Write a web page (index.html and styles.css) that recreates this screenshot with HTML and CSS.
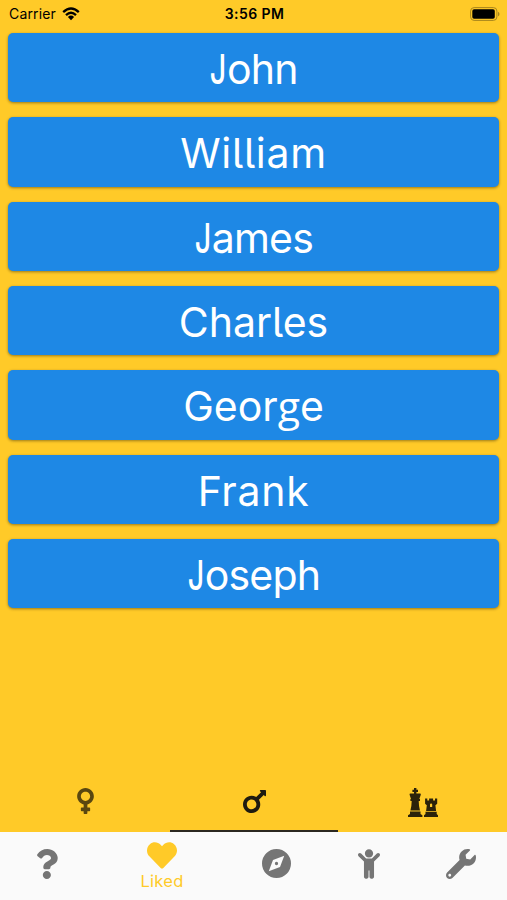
FILE: index.html
```
<!DOCTYPE html>
<html lang="en">
<head>
    <meta charset="UTF-8">
    <meta name="viewport" content="width=device-width, initial-scale=1.0">
    <title>Liked Names</title>
    <link rel="stylesheet" href="styles.css">
</head>
<body>
<header class="status">
    <div class="carrier">
        <span>Carrier</span>
        <svg class="wifi" viewBox="0 0 18 14">
            <path d="M1.2 5.2Q9-2.2 16.800 5.200M4 8.200Q9 3.400 14 8.200" fill="none" stroke="#000" stroke-width="2.300"/>
            <path d="M5.900 10Q9 7.200 12.100 10L9 13.300z"/>
        </svg>
    </div>
    <div class="clock">3:56 PM</div>
    <svg class="battery" viewBox="0 0 30 14">
        <rect x=".6" y=".6" width="26.300" height="12.800" rx="3.500" fill="none" stroke="#a8851d" stroke-width="1"/>
        <rect x="2.300" y="2.300" width="22.500" height="9.400" rx="1.800"/>
        <path d="M28 4.700v4.600q1.500-.7 1.500-2.300t-1.500-2.300z" fill="#a8851d"/>
    </svg>
</header>

<main class="names">
    <div class="card tight"><span class="narrow-j">J</span>ohn</div>
    <div class="card wide">William</div>
    <div class="card tight"><span class="narrow-j">J</span>ames</div>
    <div class="card">Charles</div>
    <div class="card">Geor<span class="double-g">g</span>e</div>
    <div class="card wide">Frank</div>
    <div class="card tight"><span class="narrow-j">J</span>oseph</div>
</main>

<div class="tabs">
    <div class="tab">
        <svg class="venus" viewBox="0 32 288 448"><path d="M288 176c0-79.500-64.500-144-144-144S0 96.500 0 176c0 68.500 47.900 125.900 112 140.400V368H76c-6.600 0-12 5.400-12 12v40c0 6.600 5.400 12 12 12h36v36c0 6.600 5.400 12 12 12h40c6.600 0 12-5.400 12-12v-36h36c6.600 0 12-5.400 12-12v-40c0-6.600-5.400-12-12-12h-36v-51.600c64.100-14.600 112-71.900 112-140.400zm-224 0c0-44.100 35.900-80 80-80s80 35.900 80 80-35.900 80-80 80-80-35.900-80-80z"/></svg>
    </div>
    <div class="tab active">
        <svg class="mars" viewBox="0 64 384 384"><path d="M372 64h-79c-10.700 0-16 12.900-8.500 20.500l16.900 16.900-80.700 80.700C198.500 167.600 172.200 160 144 160 64.500 160 0 224.500 0 304s64.500 144 144 144 144-64.500 144-144c0-28.200-8.100-54.500-22.100-76.700l80.700-80.700 16.900 16.900c7.600 7.600 20.500 2.200 20.500-8.500V76c0-6.600-5.400-12-12-12zM144 384c-44.100 0-80-35.900-80-80s35.900-80 80-80 80 35.900 80 80-35.900 80-80 80z"/></svg>
    </div>
    <div class="tab">
        <svg class="chess" viewBox="0 0 30 30">
            <path d="M6 0h2.400v1.700H10V4H8.400v1.500H12q1 0 .8 1.200L11.300 11H12v2h-1.300q.1 6 1.300 9.500H2.400Q3.600 19 3.700 13H2.400v-2H3L1.600 6.700Q1.400 5.500 2.400 5.500H6V4H4.400V1.700H6zM2 23.600h10.500v2.300l1.900 1.400V29H0v-1.700l2-1.400z"/>
            <path fill-rule="evenodd" d="M17.100 10.500h2.200v2h1.800v-2h4v2H27v-2h2.200v5.200l-1.800 1.600.7 5.700h-10l.7-5.700-1.700-1.600zM22 16.500v2.500h2.200v-2.500q0-1-1.100-1t-1.100 1zM17.500 23.800h11.200V26l1.300 1.300V29H16v-1.700l1.500-1.300z"/>
        </svg>
    </div>
</div>

<nav class="bottom-nav">
    <div class="item help">
        <svg viewBox="28 0 350 512"><path d="M202.021 0C122.202 0 70.503 32.703 29.914 91.026c-7.363 10.580-5.093 25.086 5.178 32.874l43.138 32.709c10.373 7.865 25.132 6.026 33.253-4.148 25.049-31.381 43.630-49.449 82.757-49.449 30.764 0 68.816 19.799 68.816 49.631 0 22.552-18.617 34.134-48.993 51.164-35.423 19.860-82.299 44.576-82.299 106.405V320c0 13.255 10.745 24 24 24h72.471c13.255 0 24-10.745 24-24v-5.773c0-42.860 125.268-44.645 125.268-160.627C377.504 66.256 286.902 0 202.021 0zM192 373.459c-38.196 0-69.271 31.075-69.271 69.271 0 38.195 31.075 69.270 69.271 69.270s69.271-31.075 69.271-69.271-31.075-69.270-69.271-69.270z"/></svg>
    </div>
    <div class="item liked">
        <svg viewBox="0 32 512 448"><path d="M462.300 62.600C407.500 15.900 326 24.300 275.700 76.200L256 96.500l-19.700-20.300C186.100 24.300 104.500 15.900 49.700 62.600c-62.800 53.600-66.100 149.800-9.900 207.900l193.500 199.800c12.500 12.900 32.800 12.900 45.300 0l193.500-199.800c56.300-58.100 53-154.300-9.800-207.900z"/></svg>
        <span>Liked</span>
    </div>
    <div class="item explore">
        <svg viewBox="0 0 58 58"><path fill-rule="evenodd" d="M29 0a29 29 0 1 0 0 58 29 29 0 1 0 0-58zM44.500 13.500L36 36 13.500 44.500 22 22zM29 25.700a3.300 3.300 0 1 0 0 6.600 3.300 3.300 0 1 0 0-6.600z"/></svg>
    </div>
    <div class="item child">
        <svg viewBox="0 0 384 512"><path d="M120 72c0-39.765 32.235-72 72-72s72 32.235 72 72c0 39.764-32.235 72-72 72s-72-32.236-72-72zm254.627 1.373c-12.496-12.497-32.758-12.497-45.254 0L242.745 160H141.254L54.627 73.373c-12.496-12.497-32.758-12.497-45.254 0-12.497 12.497-12.497 32.758 0 45.255L104 213.254V480c0 17.673 14.327 32 32 32h16c17.673 0 32-14.327 32-32V368h16v112c0 17.673 14.327 32 32 32h16c17.673 0 32-14.327 32-32V213.254l94.627-94.626c12.497-12.497 12.497-32.758 0-45.255z"/></svg>
    </div>
    <div class="item settings">
        <svg viewBox="0 0 512 512"><path d="M507.730 109.100c-2.240-9.030-13.540-12.090-20.120-5.510l-74.360 74.360-67.880-11.310-11.310-67.880 74.360-74.360c6.620-6.620 3.430-17.900-5.660-20.160-47.380-11.740-99.550.91-136.580 37.930-39.640 39.640-50.550 97.100-34.050 147.200L18.740 402.760c-24.990 24.990-24.990 65.510 0 90.500 24.990 24.990 65.510 24.990 90.500 0l213.210-213.210c50.120 16.710 107.470 5.680 147.370-34.220 37.070-37.070 49.700-89.320 37.910-136.730zM64 472c-13.250 0-24-10.750-24-24 0-13.260 10.750-24 24-24s24 10.740 24 24c0 13.250-10.750 24-24 24z"/></svg>
    </div>
</nav>
</body>
</html>
```
FILE: styles.css
```
* {
    box-sizing: border-box;
}

body {
    display: flex;
    flex-direction: column;
    margin: 0;
    height: 100vh;
    overflow: hidden;
    font-family: Inter, "Liberation Sans", sans-serif;
    background-color: #ffca28;
}

svg {
    display: block;
    flex: none;
}

.status {
    display: grid;
    grid-template-columns: 1fr auto 1fr;
    align-items: center;
    height: 27px;
    padding: 0 7px 0 9px;
    font-size: 14px;
}

.carrier {
    display: flex;
    align-items: center;
    gap: 6px;
    letter-spacing: 0.15px;
}

.wifi {
    width: 18px;
    height: 14px;
}

.clock {
    font-weight: 600;
    letter-spacing: 0.4px;
}

.battery {
    width: 30px;
    height: 14px;
    justify-self: end;
}

.names {
    display: flex;
    flex-direction: column;
    gap: 15px;
    flex: 1;
    padding: 6px 8px 0;
}

.card {
    height: 69.33px;
    line-height: 73px;
    border-radius: 5px;
    color: #fff;
    background-color: #1e88e5;
    box-shadow: 0 1px 3px rgba(0, 0, 0, 0.4);
    font-size: 41px;
    text-align: center;
    font-feature-settings: "cv05";
}

.tight {
    letter-spacing: -0.8px;
}

.wide {
    letter-spacing: 0.7px;
}

/* Inter's J is too broad next to the other letters */
.narrow-j {
    display: inline-block;
    margin-left: -6px;
    margin-right: 1px;
    font-weight: 500;
    transform: scaleX(0.7);
    transform-origin: right;
}

.double-g {
    font-family: "Open Sans", sans-serif;
    line-height: 1;
}

.tabs {
    display: flex;
    height: 60px;
    padding-left: 1px;
}

.tab {
    display: flex;
    flex: 1;
    justify-content: center;
    align-items: center;
    border-bottom: 2px solid transparent;
    fill: #5a4710;
}

.tab.active {
    border-bottom-color: #2b2820;
    fill: #1f1b10;
}

.venus {
    width: 17px;
    height: 26px;
}

.mars {
    width: 23px;
    height: 23px;
}

.chess {
    width: 30px;
    height: 30px;
    margin-top: 3px;
    fill: #2b220a;
}

.bottom-nav {
    display: flex;
    height: 68px;
    padding-left: 1px;
    background-color: #fafafa;
}

.item {
    display: flex;
    flex-direction: column;
    align-items: center;
    width: 92px;
    padding-top: 17px;
    fill: #757575;
}

.help svg {
    width: 21px;
    height: 30px;
}

.liked {
    width: 138px;
    padding-top: 10px;
    color: #ffca28;
    fill: #ffca28;
    font-size: 16.5px;
    letter-spacing: 0.3px;
    font-feature-settings: "cv05";
}

.liked span {
    margin-top: 2px;
}

.liked svg {
    width: 30px;
    height: 27px;
}

.explore svg {
    width: 29px;
    height: 29px;
    margin-right: 2px;
}

.child svg {
    width: 22px;
    height: 30px;
}

.settings svg {
    width: 30px;
    height: 30px;
}
```
